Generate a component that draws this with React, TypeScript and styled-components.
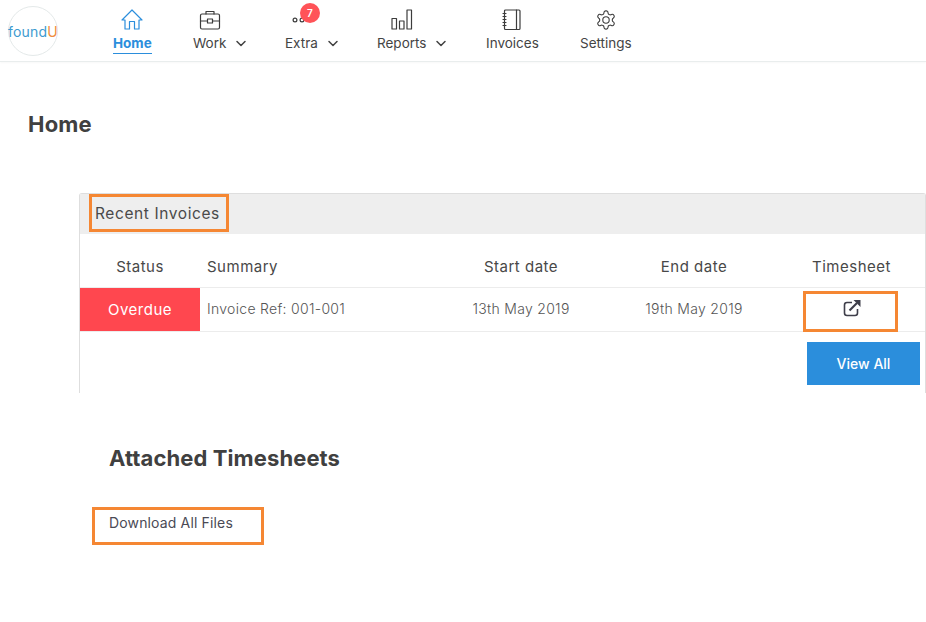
import styled, { createGlobalStyle } from "styled-components";
import { ReactNode } from "react";

const GlobalStyle = createGlobalStyle`
    html, body {
        margin: 0;
        padding: 0;
        background: #fff;
    }
    body {
        font-family: "Inter", "Open Sans", sans-serif;
        color: #404040;
        overflow: hidden;
    }
    * {
        box-sizing: border-box;
    }
`;

const Page = styled.div`
    width: 926px;
    height: 622px;
    overflow: hidden;
`;

const Header = styled.header`
    height: 62px;
    display: flex;
    align-items: flex-start;
    padding: 6px 0 0 8px;
    border-bottom: 1px solid #e9eded;
    box-shadow: 0 1px 2px rgba(0, 0, 0, 0.03);
`;

const LogoCircle = styled.div`
    width: 50px;
    height: 50px;
    border-radius: 50%;
    border: 1px solid #e4e9e9;
    display: flex;
    align-items: center;
    justify-content: center;
    font-size: 14px;
    letter-spacing: 0.2px;
    color: #3d9bd0;
    flex-shrink: 0;
`;

const LogoAccent = styled.span`
    color: #ef8d3c;
`;

const NavList = styled.nav`
    display: flex;
    margin-left: 55px;
`;

const NavItem = styled.div<{ $pitch: number }>`
    width: ${props => props.$pitch}px;
    height: 55px;
    display: grid;
    grid-template-columns: auto auto;
    grid-template-rows: 28px 20px;
    column-gap: 9px;
    justify-content: start;
    align-items: center;
    position: relative;
`;

const NavIcon = styled.div<{ $active?: boolean }>`
    grid-column: 1;
    grid-row: 1;
    align-self: start;
    margin-top: 3px;
    height: 22px;
    display: flex;
    justify-content: center;
    color: ${props => (props.$active ? "#2b8edc" : "#3c3c3c")};
`;

const NavName = styled.span<{ $active?: boolean }>`
    grid-column: 1;
    grid-row: 2;
    font-size: 13.5px;
    line-height: 19px;
    white-space: nowrap;
    font-weight: ${props => (props.$active ? 700 : 400)};
    color: ${props => (props.$active ? "#2b8edc" : "#444")};
    border-bottom: ${props => (props.$active ? "1px solid #2b8edc" : "1px solid transparent")};
    text-align: center;
`;

const ChevronSlot = styled.span`
    grid-column: 2;
    grid-row: 2;
    display: flex;
    align-items: center;
`;

const Badge = styled.span`
    position: absolute;
    top: -3px;
    left: 15px;
    width: 20px;
    height: 20px;
    border-radius: 50%;
    background: #ff5358;
    color: #fff;
    font-size: 10px;
    font-weight: 600;
    display: flex;
    align-items: center;
    justify-content: center;
`;

const Main = styled.main`
    padding: 49px 0 0 28px;
`;

const PageTitle = styled.h1`
    margin: 0;
    font-size: 22px;
    line-height: 26px;
    font-weight: 700;
    letter-spacing: 0.2px;
    color: #404040;
`;

const Card = styled.section`
    margin: 56px 0 0 51px;
    width: 847px;
    height: 200px;
    border: 1px solid #dedede;
    border-bottom: none;
    border-radius: 3px 3px 0 0;
`;

const CardHeader = styled.div`
    height: 40px;
    background: #eee;
    padding-left: 9px;
`;

const HighlightTitle = styled.div`
    width: 140px;
    height: 38px;
    border: 3px solid #f58733;
    font-size: 15.5px;
    letter-spacing: 0.6px;
    line-height: 34px;
    padding-left: 3px;
    white-space: nowrap;
    color: #4a4a4a;
`;

const TableRow = styled.div<{ $head?: boolean }>`
    display: grid;
    grid-template-columns: 120px 232px 178px 168px 147px;
    height: ${props => (props.$head ? "54px" : "44px")};
    border-bottom: 1px solid #ececec;
    padding-top: ${props => (props.$head ? "13px" : "0")};
`;

const HeadCell = styled.div<{ $left?: boolean }>`
    font-size: 15px;
    letter-spacing: 0.5px;
    line-height: 40px;
    text-align: ${props => (props.$left ? "left" : "center")};
    padding-left: ${props => (props.$left ? "7px" : "0")};
    color: #484848;
`;

const StatusCell = styled.div`
    background: #ff474f;
    color: #fff;
    font-size: 15px;
    letter-spacing: 0.5px;
    line-height: 43px;
    text-align: center;
`;

const BodyCell = styled.div<{ $left?: boolean }>`
    font-size: 14px;
    font-weight: 300;
    letter-spacing: 0.3px;
    line-height: 42px;
    text-align: ${props => (props.$left ? "left" : "center")};
    padding-left: ${props => (props.$left ? "7px" : "0")};
    color: #555;
`;

const LinkCell = styled.div`
    display: flex;
    justify-content: flex-end;
    padding-right: 27px;
`;

const HighlightLink = styled.div`
    width: 95px;
    height: 41px;
    margin-top: 3px;
    margin-bottom: -1px;
    border: 3px solid #f58733;
    display: flex;
    justify-content: center;
    padding: 5px 0 0 3px;
    color: #3e3e4a;
`;

const CardFooter = styled.div`
    display: flex;
    justify-content: flex-end;
    padding: 10px 5px 0 0;
`;

const ViewAllButton = styled.button`
    width: 113px;
    height: 43px;
    background: #2b8edc;
    color: #fff;
    border: none;
    font-family: inherit;
    font-size: 14px;
    font-weight: 500;
    padding: 0;
`;

const Section = styled.section`
    margin: 52px 0 0 64px;
`;

const SectionTitle = styled.h2`
    margin: 0 0 0 17px;
    font-size: 22px;
    line-height: 26px;
    font-weight: 700;
    letter-spacing: 0.1px;
    color: #404040;
`;

const HighlightDownload = styled.div`
    margin-top: 36px;
    width: 172px;
    height: 38px;
    border: 3px solid #f58733;
    padding-left: 14px;
    font-size: 14px;
    letter-spacing: 0.15px;
    line-height: 26px;
    white-space: nowrap;
    color: #4a4a55;
`;

const Line = styled.svg`
    fill: none;
    stroke: currentColor;
    stroke-width: 1.2;
    stroke-linejoin: round;
    stroke-linecap: round;
`;

const Chevron = () => (
    <Line width="12" height="8" viewBox="0 0 12 8" style={{ strokeWidth: 1.5 }}>
        <path d="M2 1.5 L6 5.5 L10 1.5" />
    </Line>
);

const HomeGlyph = () => (
    <Line width="22" height="22" viewBox="0 0 22 22">
        <path d="M1 11 L11 1 L21 11 L18 11 L18 20 L13.5 20 L13.5 12.5 L8.5 12.5 L8.5 20 L4 20 L4 11 Z" />
    </Line>
);

const WorkGlyph = () => (
    <Line width="22" height="22" viewBox="0 0 22 22">
        <rect x="1.5" y="5" width="19" height="15" rx="1.5" />
        <path d="M7 5 V2.5 H15 V5 M1.5 12 H8.5 M13.5 12 H20.5" />
        <rect x="8.5" y="10" width="5" height="4" />
    </Line>
);

const ExtraGlyph = () => (
    <Line width="22" height="22" viewBox="0 0 22 22">
        <circle cx="5" cy="11" r="1.9" />
        <circle cx="12" cy="11" r="1.9" />
    </Line>
);

const ReportsGlyph = () => (
    <Line width="22" height="22" viewBox="0 0 22 22">
        <rect x="1" y="9.5" width="4.5" height="10.5" />
        <rect x="8.5" y="12" width="4.5" height="8" />
        <rect x="16" y="1" width="4.5" height="19" />
    </Line>
);

const InvoicesGlyph = () => (
    <Line width="22" height="22" viewBox="0 0 22 22">
        <rect x="3.5" y="1" width="15.5" height="19.5" rx="1" />
        <path d="M15.5 1 V20.5 M2 4.5 H5 M2 7.5 H5 M2 10.5 H5 M2 13.5 H5 M2 16.5 H5" />
    </Line>
);

const SettingsGlyph = () => (
    <Line width="22" height="22" viewBox="0 0 24 24">
        <path d="M12.22 2h-.44a2 2 0 0 0-2 2v.18a2 2 0 0 1-1 1.73l-.43.25a2 2 0 0 1-2 0l-.15-.08a2 2 0 0 0-2.73.73l-.22.38a2 2 0 0 0 .73 2.73l.15.1a2 2 0 0 1 1 1.72v.51a2 2 0 0 1-1 1.74l-.15.09a2 2 0 0 0-.73 2.73l.22.38a2 2 0 0 0 2.73.73l.15-.08a2 2 0 0 1 2 0l.43.25a2 2 0 0 1 1 1.73V20a2 2 0 0 0 2 2h.44a2 2 0 0 0 2-2v-.18a2 2 0 0 1 1-1.73l.43-.25a2 2 0 0 1 2 0l.15.08a2 2 0 0 0 2.73-.73l.22-.39a2 2 0 0 0-.73-2.73l-.15-.08a2 2 0 0 1-1-1.74v-.5a2 2 0 0 1 1-1.74l.15-.09a2 2 0 0 0 .73-2.73l-.22-.38a2 2 0 0 0-2.73-.73l-.15.08a2 2 0 0 1-2 0l-.43-.25a2 2 0 0 1-1-1.73V4a2 2 0 0 0-2-2z" />
        <circle cx="12" cy="12" r="3.5" />
    </Line>
);

const ExternalGlyph = () => (
    <svg width="18" height="18" viewBox="0 0 18 18" fill="none">
        <path d="M9 3.5 H4 A2.5 2.5 0 0 0 1.5 6 V14 A2.5 2.5 0 0 0 4 16.5 H12 A2.5 2.5 0 0 0 14.5 14 V10" stroke="currentColor" strokeWidth="1.6" />
        <path d="M6.5 11.5 L14 4" stroke="currentColor" strokeWidth="2.2" />
        <path d="M10.5 1 H17.5 V8 Z" fill="currentColor" />
    </svg>
);

type NavEntry = {
    name: string;
    pitch: number;
    icon: ReactNode;
    active?: boolean;
    menu?: boolean;
    badge?: string;
};

const navEntries: NavEntry[] = [
    { name: "Home", pitch: 80, icon: <HomeGlyph />, active: true },
    { name: "Work", pitch: 92, icon: <WorkGlyph />, menu: true },
    { name: "Extra", pitch: 92, icon: <ExtraGlyph />, menu: true, badge: "7" },
    { name: "Reports", pitch: 109, icon: <ReportsGlyph />, menu: true },
    { name: "Invoices", pitch: 94, icon: <InvoicesGlyph /> },
    { name: "Settings", pitch: 60, icon: <SettingsGlyph /> },
];

function App() {
    return (
        <Page>
            <GlobalStyle />
            <Header>
                <LogoCircle>
                    <span>
                        found<LogoAccent>U</LogoAccent>
                    </span>
                </LogoCircle>
                <NavList>
                    {navEntries.map(entry => (
                        <NavItem key={entry.name} $pitch={entry.pitch}>
                            <NavIcon $active={entry.active}>{entry.icon}</NavIcon>
                            {entry.badge && <Badge>{entry.badge}</Badge>}
                            <NavName $active={entry.active}>{entry.name}</NavName>
                            {entry.menu && (
                                <ChevronSlot>
                                    <Chevron />
                                </ChevronSlot>
                            )}
                        </NavItem>
                    ))}
                </NavList>
            </Header>
            <Main>
                <PageTitle>Home</PageTitle>
                <Card>
                    <CardHeader>
                        <HighlightTitle>Recent Invoices</HighlightTitle>
                    </CardHeader>
                    <TableRow $head>
                        <HeadCell>Status</HeadCell>
                        <HeadCell $left>Summary</HeadCell>
                        <HeadCell>Start date</HeadCell>
                        <HeadCell>End date</HeadCell>
                        <HeadCell>Timesheet</HeadCell>
                    </TableRow>
                    <TableRow>
                        <StatusCell>Overdue</StatusCell>
                        <BodyCell $left>Invoice Ref: 001-001</BodyCell>
                        <BodyCell>13th May 2019</BodyCell>
                        <BodyCell>19th May 2019</BodyCell>
                        <LinkCell>
                            <HighlightLink>
                                <ExternalGlyph />
                            </HighlightLink>
                        </LinkCell>
                    </TableRow>
                    <CardFooter>
                        <ViewAllButton>View All</ViewAllButton>
                    </CardFooter>
                </Card>
                <Section>
                    <SectionTitle>Attached Timesheets</SectionTitle>
                    <HighlightDownload>Download All Files</HighlightDownload>
                </Section>
            </Main>
        </Page>
    );
}

export default App;
